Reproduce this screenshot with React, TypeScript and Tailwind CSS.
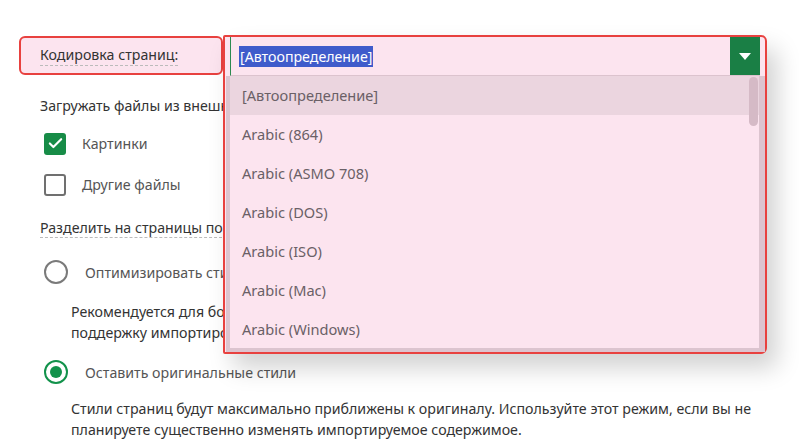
import { Check } from "lucide-react";

const encodings = [
  "[Автоопределение]",
  "Arabic (864)",
  "Arabic (ASMO 708)",
  "Arabic (DOS)",
  "Arabic (ISO)",
  "Arabic (Mac)",
  "Arabic (Windows)",
];

function Checkbox({ checked, label }: { checked?: boolean; label: string }) {
  return (
    <div className="flex items-center h-[41px]">
      {checked ? (
        <span className="shrink-0 ml-[4px] w-[22px] h-[22px] rounded-[3px] bg-[#178c47] flex items-center justify-center">
          <Check className="w-[17px] h-[17px] text-white" strokeWidth={3} />
        </span>
      ) : (
        <span className="shrink-0 ml-[4px] w-[22px] h-[22px] rounded-[3px] border-2 border-[#707070]" />
      )}
      <span className="ml-[16px] text-[#555]">{label}</span>
    </div>
  );
}

function Radio({ checked, label }: { checked?: boolean; label: string }) {
  return (
    <div className="flex items-center h-[24px]">
      {checked ? (
        <span className="shrink-0 ml-[4px] w-[24px] h-[24px] rounded-full border-[2.5px] border-[#12924b] flex items-center justify-center">
          <span className="w-[12px] h-[12px] rounded-full bg-[#12924b]" />
        </span>
      ) : (
        <span className="shrink-0 ml-[4px] w-[24px] h-[24px] rounded-full border-[2.5px] border-[#7a7a7a]" />
      )}
      <span className="ml-[17px] text-[#555] whitespace-nowrap">{label}</span>
    </div>
  );
}

export default function App() {
  return (
    <div className="w-[799px] h-[446px] bg-white overflow-hidden text-[14.2px] text-[#333] font-['Noto_Sans',sans-serif]">
      {/* Encoding row */}
      <div className="flex pt-[36px] pl-[19px]">
        <div className="w-[204px] h-[39px] border-2 border-[#e8413f] rounded-[6px] bg-[#fce4ef] flex items-center pl-[19px]">
          <span className="border-b border-dashed border-[#bbb] leading-[20px]">Кодировка страниц:</span>
        </div>

        {/* Select with opened list */}
        <div className="relative w-[544px] h-[39px] -mt-[1px]">
          <div className="absolute top-0 left-0 w-[544px] h-[319px] border-2 border-[#e8413f] rounded-r-[6px] rounded-l-[2px] bg-[#fce4ef] pl-[5px] flex flex-col shadow-[10px_14px_24px_rgba(0,0,0,0.18)] z-10">
            <div className="h-[39px] shrink-0 flex items-stretch border-l border-[#2c8a50] border-b border-b-[#dcc3ce] mr-[5px]">
              <div className="flex-1 flex items-center pl-[8px]">
                <span className="bg-[#3f5bcb] text-white leading-[21px] px-[1px] mt-[1px]">[Автоопределение]</span>
              </div>
              <div className="w-[30px] bg-[#1a7f45] flex items-center justify-center">
                <svg width="12" height="7" viewBox="0 0 12 7">
                  <path d="M0 0h12L6 7z" fill="white" />
                </svg>
              </div>
            </div>
            <div className="relative flex-1 overflow-hidden -ml-[4px] border-l-[4px] border-r-[6px] border-b-[4px] border-[#dcc4cf] bg-[#fce4ef] text-[14.6px]">
              {encodings.map((e, i) => (
                <div
                  key={e}
                  className={`h-[39px] flex items-center pl-[12px] text-[#6a6066] ${i === 0 ? "bg-[#ebd5df]" : ""}`}
                >
                  {e}
                </div>
              ))}
              <div className="absolute top-[1px] right-[1px] w-[9px] h-[49px] rounded-full bg-[#d5bac6]" />
            </div>
          </div>
        </div>
      </div>

      {/* Left content (partly covered by the open list) */}
      <div className="pl-[40px] pt-[19px]">
        <div className="leading-[24px]">Загружать файлы из внешних источников:</div>
        <div className="mt-[5px]">
          <Checkbox checked label="Картинки" />
          <Checkbox label="Другие файлы" />
        </div>
        <div className="mt-[12px]">
          <span className="border-b border-dashed border-[#bbb] leading-[20px]">Разделить на страницы по:</span>
        </div>
        <div className="mt-[22px]">
          <Radio label="Оптимизировать стили" />
        </div>
        <div className="pl-[31px] mt-[17px] leading-[21px]">
          <div>Рекомендуется для больших документов. Обеспечивает лучшую</div>
          <div>поддержку импортированных стилей.</div>
        </div>
        <div className="mt-[17px]">
          <Radio checked label="Оставить оригинальные стили" />
        </div>
        <div className="pl-[31px] mt-[14px] leading-[21px]">
          <div>Стили страниц будут максимально приближены к оригиналу. Используйте этот режим, если вы не</div>
          <div>планируете существенно изменять импортируемое содержимое.</div>
        </div>
      </div>
    </div>
  );
}
